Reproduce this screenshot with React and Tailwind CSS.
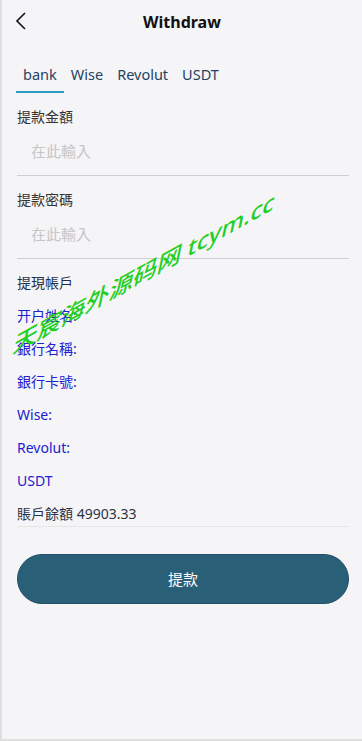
import { useState } from 'react';

const font = { fontFamily: '"Noto Sans", "Noto Sans CJK TC", sans-serif' };

const tabs = ['bank', 'Wise', 'Revolut', 'USDT'];

const accountRows = ['开户姓名:', '銀行名稱:', '銀行卡號:', 'Wise:', 'Revolut:', 'USDT'];

function Field({ label }) {
  return (
    <div className="pt-[7px]">
      <div className="text-[14px] leading-[20px] text-[#333]">{label}</div>
      <input
        type="password"
        placeholder="在此輸入"
        className="mt-[13px] w-full bg-transparent pl-[14px] text-[15px] leading-[22px] text-[#333] placeholder:text-[#c6c6c6] outline-none"
      />
      <div className="mt-[12px] h-px bg-[#cfcfd1]" />
    </div>
  );
}

export default function App() {
  const [active, setActive] = useState(0);

  return (
    <div
      className="relative h-[741px] w-[362px] overflow-hidden border-l-2 border-b-2 border-[#dedede] bg-[#f5f4f6]"
      style={font}
    >
      <div className="relative flex h-[43px] items-center justify-center">
        <button type="button" className="absolute left-[12px] top-[11px] text-[#111]">
          <svg width="14" height="20" viewBox="0 0 14 20" fill="none" stroke="currentColor" strokeWidth="1.6">
            <path d="M11 2 L3 10 L11 18" />
          </svg>
        </button>
        <h1 className="text-[16px] font-bold text-[#111]">Withdraw</h1>
      </div>

      <div className="mt-[20px] flex px-[14px]">
        {tabs.map((t, i) => (
          <button
            key={t}
            type="button"
            onClick={() => setActive(i)}
            className={`relative px-[7px] pb-[7px] text-[14.5px] leading-[22px] text-[#1f4361] ${i === active ? 'after:absolute after:left-0 after:right-0 after:-bottom-[1px] after:h-[2px] after:bg-[#2a9bc1]' : ''}`}
          >
            {t}
          </button>
        ))}
      </div>

      <div className="px-[15px] pr-[13px] pt-[8px]">
        <Field label="提款金額" />
        <div className="mt-[7px]">
          <Field label="提款密碼" />
        </div>

        <div className="mt-[14px] text-[14px] leading-[20px] text-[#1f2f4a]">提現帳戶</div>
        <div className="flex flex-col">
          {accountRows.map((r) => (
            <div key={r} className="mt-[13px] text-[14px] leading-[20px] text-[#2020cf]">
              {r}
            </div>
          ))}
        </div>
        <div className="mt-[13px] border-b border-[#e6e6e8] pb-[2px] text-[14px] leading-[20px] text-[#2a3344]">
          賬戶餘額 49903.33
        </div>

        <button
          type="button"
          className="mt-[27px] flex h-[50px] w-full items-center justify-center rounded-full border border-[#244f6b] bg-[#2a5f78] text-[15px] text-white"
        >
          提款
        </button>
      </div>

      <div
        className="pointer-events-none absolute left-[12px] top-[333px] whitespace-nowrap text-[24px] leading-none font-medium text-[#22cf1f]"
        style={{ transform: 'skew(-12deg, -29deg)', transformOrigin: 'left center' }}
      >
        天宸海外源码网 tcym.cc
      </div>
    </div>
  );
}
